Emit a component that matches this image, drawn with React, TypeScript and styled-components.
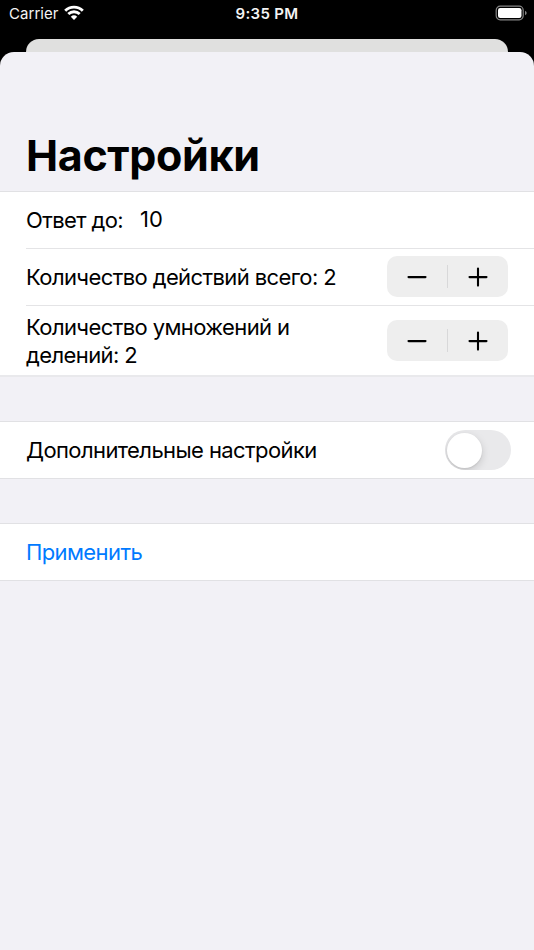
import React, { useState } from "react";
import styled, { createGlobalStyle } from "styled-components";

const GlobalStyle = createGlobalStyle`
  * { box-sizing: border-box; }
  html, body { margin: 0; padding: 0; background: #000; }
  body { font-family: Inter, "Liberation Sans", sans-serif; color: #000; }
  button { font: inherit; border: 0; padding: 0; background: none; color: inherit; }
`;

const Screen = styled.main`
  width: 534px;
  height: 950px;
  display: flex;
  flex-direction: column;
  overflow: hidden;
  background: #000;
`;

const StatusBar = styled.header`
  height: 39px;
  flex: none;
  display: grid;
  grid-template-columns: 1fr auto 1fr;
  padding: 0 7px 0 9px;
  color: #f4f4f4;
  font-size: 15px;
  line-height: 28px;
`;

const Carrier = styled.div`
  display: flex;
  height: 28px;
  gap: 5px;
  letter-spacing: 0.05px;

  svg { margin-top: 5px; }
`;

const Clock = styled.time`
  margin-right: 2px;
  font-weight: 600;
  letter-spacing: 0.35px;
`;

const BatterySlot = styled.div`
  display: flex;
  justify-content: flex-end;

  svg { margin-top: 5px; }
`;

const BackCard = styled.div`
  height: 13px;
  flex: none;
  margin: 0 26px;
  border-radius: 13px 13px 0 0;
  background: #e0e0df;
`;

const Sheet = styled.section`
  flex: 1;
  border-radius: 14px 14px 0 0;
  background: #f2f1f6;
`;

const Title = styled.h1`
  height: 139px;
  margin: 0;
  padding: 76px 0 0 26px;
  font-size: 43px;
  line-height: 54px;
  font-weight: 700;
  letter-spacing: -0.35px;
`;

const Group = styled.div<{ $gap?: number; $softEdge?: boolean }>`
  margin-top: ${({ $gap = 0 }) => $gap}px;
  border-top: 1px solid #e1e1e4;
  border-bottom: ${({ $softEdge }) => ($softEdge ? "2px solid #e9e9ec" : "1px solid #e1e1e4")};
  background: #fff;
  padding-left: 26px;
`;

const Row = styled.div<{ $height: number; $divided?: boolean; $right?: number; $top?: number }>`
  height: ${({ $height }) => $height}px;
  display: flex;
  align-items: center;
  justify-content: space-between;
  padding-top: ${({ $top = 0 }) => $top}px;
  padding-right: ${({ $right = 26 }) => $right}px;
  border-bottom: ${({ $divided }) => ($divided ? "1px solid #e4e4e6" : "0")};
`;

const Label = styled.span`
  font-size: 22px;
  line-height: 28px;
  letter-spacing: -0.6px;
  white-space: pre-line;
`;

const Field = styled.input`
  flex: 1;
  min-width: 0;
  height: 28px;
  margin: 0 0 3px 17px;
  padding: 0;
  border: 0;
  outline: 0;
  font: 22px/28px Inter, sans-serif;
  color: #000;
`;

const StepperBox = styled.div`
  width: 121px;
  height: 41px;
  flex: none;
  display: flex;
  align-items: center;
  margin-bottom: 1px;
  border-radius: 10px;
  background: #eeeeee;
`;

const StepButton = styled.button`
  flex: 1;
  height: 100%;
  display: flex;
  align-items: center;
  justify-content: center;
`;

const StepDivider = styled.i`
  width: 1px;
  height: 23px;
  background: #d8d8d9;
`;

const SwitchTrack = styled.button<{ $on: boolean }>`
  width: 66px;
  height: 40px;
  display: flex;
  flex: none;
  align-items: center;
  justify-content: ${({ $on }) => ($on ? "flex-end" : "flex-start")};
  padding: 0 2px;
  border-radius: 20px;
  background: ${({ $on }) => ($on ? "#34c759" : "#e9e9eb")};
  overflow: hidden;
`;

const SwitchThumb = styled.span`
  width: 35px;
  height: 35px;
  border-radius: 50%;
  background: #fff;
  box-shadow: 0 3px 8px rgba(0, 0, 0, 0.15), 0 1px 2px rgba(0, 0, 0, 0.08);
`;

const Apply = styled.button`
  color: #007aff;
  text-align: left;
`;

function WifiIcon() {
  return (
    <svg width="20" height="16" viewBox="0 0 20 16" fill="none" stroke="#fff" strokeWidth="2.9">
      <path d="M1.2 5.7C6.1.9 13.9.9 18.8 5.7" />
      <path d="M4.3 9C7.6 5.9 12.4 5.9 15.7 9" />
      <path d="M6.8 11.8Q10 8.9 13.2 11.8L10 15Z" fill="#fff" stroke="none" />
    </svg>
  );
}

function BatteryIcon() {
  return (
    <svg width="32" height="16" viewBox="0 0 32 16">
      <rect x="1.2" y="1.2" width="27" height="13.6" rx="4" fill="none" stroke="#858585" strokeWidth="1.2" />
      <rect x="3" y="3" width="23.5" height="10" rx="2.2" fill="#fff" />
      <path d="M30 5.8q1.7.7 1.7 2.2T30 10.2Z" fill="#858585" />
    </svg>
  );
}

function Stepper({ onChange }: { onChange: (delta: number) => void }) {
  return (
    <StepperBox>
      <StepButton aria-label="Уменьшить" onClick={() => onChange(-1)}>
        <svg width="20" height="20" viewBox="0 0 20 20" stroke="#000" strokeWidth="2.1" strokeLinecap="round">
          <path d="M1.5 10.1H18.5" />
        </svg>
      </StepButton>
      <StepDivider />
      <StepButton aria-label="Увеличить" onClick={() => onChange(1)}>
        <svg width="20" height="20" viewBox="0 0 20 20" stroke="#000" strokeWidth="2.1" strokeLinecap="round">
          <path d="M1.5 10.1H18.5M10 1.6V18.6" />
        </svg>
      </StepButton>
    </StepperBox>
  );
}

export default function App() {
  const [limit, setLimit] = useState("10");
  const [total, setTotal] = useState(2);
  const [products, setProducts] = useState(2);
  const [advanced, setAdvanced] = useState(false);

  return (
    <>
      <GlobalStyle />
      <Screen>
        <StatusBar>
          <Carrier>Carrier<WifiIcon /></Carrier>
          <Clock>9:35 PM</Clock>
          <BatterySlot><BatteryIcon /></BatterySlot>
        </StatusBar>
        <BackCard />
        <Sheet>
          <Title>Настройки</Title>
          <Group $softEdge>
            <Row $height={57} $divided>
              <Label>Ответ до:</Label>
              <Field aria-label="Ответ до" value={limit} onChange={(e) => setLimit(e.target.value)} />
            </Row>
            <Row $height={57} $divided>
              <Label>Количество действий всего: {total}</Label>
              <Stepper onChange={(d) => setTotal(total + d)} />
            </Row>
            <Row $height={69} $top={1}>
              <Label>{`Количество умножений и\nделений: ${products}`}</Label>
              <Stepper onChange={(d) => setProducts(products + d)} />
            </Row>
          </Group>
          <Group $gap={44}>
            <Row $height={56} $right={23}>
              <Label>Дополнительные настройки</Label>
              <SwitchTrack role="switch" aria-checked={advanced} $on={advanced} onClick={() => setAdvanced(!advanced)}>
                <SwitchThumb />
              </SwitchTrack>
            </Row>
          </Group>
          <Group $gap={44}>
            <Row $height={56}>
              <Apply><Label>Применить</Label></Apply>
            </Row>
          </Group>
        </Sheet>
      </Screen>
    </>
  );
}
